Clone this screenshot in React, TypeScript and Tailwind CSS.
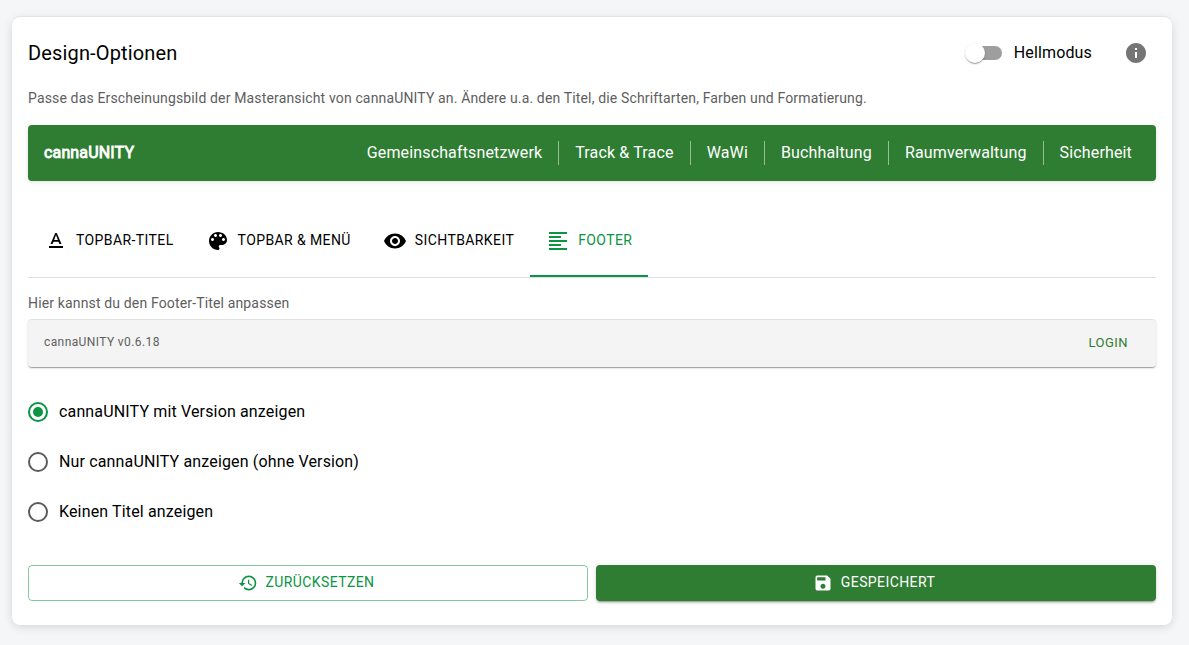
import type { ReactNode } from "react";
import { MdFormatAlignLeft, MdHistory, MdInfo, MdSave, MdTextFormat, MdVisibility } from "react-icons/md";

const navItems = [
  "Gemeinschaftsnetzwerk",
  "Track & Trace",
  "WaWi",
  "Buchhaltung",
  "Raumverwaltung",
  "Sicherheit",
];

function PaletteIcon() {
  return (
    <svg viewBox="0 0 24 24" fill="currentColor" className="h-6 w-6">
      <path d="M12 3c-4.97 0-9 4.03-9 9s4.03 9 9 9c.83 0 1.5-.67 1.5-1.5 0-.39-.15-.74-.39-1.01-.23-.26-.38-.61-.38-.99 0-.83.67-1.5 1.5-1.5H16c2.76 0 5-2.24 5-5 0-4.42-4.03-8-9-8zm-5.5 9c-.83 0-1.5-.67-1.5-1.5S5.67 9 6.5 9 8 9.67 8 10.5 7.33 12 6.5 12zm3-4C8.67 8 8 7.33 8 6.5S8.67 5 9.5 5s1.5.67 1.5 1.5S10.33 8 9.5 8zm5 0c-.83 0-1.5-.67-1.5-1.5S13.67 5 14.5 5s1.5.67 1.5 1.5S15.33 8 14.5 8zm3 4c-.83 0-1.5-.67-1.5-1.5S16.67 9 17.5 9s1.5.67 1.5 1.5-.67 1.5-1.5 1.5z" />
    </svg>
  );
}

function Header() {
  return (
    <header className="flex h-[72px] items-center justify-between">
      <h1 className="text-[20px] leading-8 tracking-[0.15px]">Design-Optionen</h1>
      <div className="flex items-center pr-2">
        <button aria-label="Hellmodus" className="flex h-[14px] w-[37px] items-center pl-px">
          <span className="flex h-[14px] w-[34px] items-center rounded-full bg-[#9e9e9e]">
            <span className="-ml-[1px] h-5 w-5 shrink-0 -translate-x-[2px] rounded-full bg-white shadow-[0_2px_1px_-1px_rgba(0,0,0,0.2),0_1px_1px_0_rgba(0,0,0,0.14),0_1px_3px_0_rgba(0,0,0,0.12)]" />
          </span>
        </button>
        <span className="ml-[10px] text-[16px] leading-6 tracking-[0.15px]">Hellmodus</span>
        <MdInfo className="ml-8 h-6 w-6 text-[#757575]" />
      </div>
    </header>
  );
}

function Topbar() {
  return (
    <nav className="flex h-14 items-center justify-between rounded-[4px] bg-[#2e7d32] px-4 text-white shadow-[0_1px_4px_rgba(0,0,0,0.12)]">
      <span className="text-[16px] leading-6 tracking-[0.15px] [-webkit-text-stroke:0.8px_white]">cannaUNITY</span>
      <ul className="flex items-center pr-2 text-[16px] leading-6 tracking-[0.15px]">
        {navItems.map((item, i) => (
          <li key={item} className="flex items-center">
            {i > 0 && <span className="mx-4 h-6 w-px bg-white/50" />}
            {item}
          </li>
        ))}
      </ul>
    </nav>
  );
}

function Tab({ icon, label, active = false }: { icon: ReactNode; label: string; active?: boolean }) {
  return (
    <button
      className={
        active
          ? "flex h-[71px] items-center gap-2 border-b-2 border-[#0b9444] px-4 pt-px text-[#0b9444]"
          : "flex h-[71px] items-center gap-2 border-b-2 border-transparent px-4 pt-px"
      }
    >
      {icon}
      <span className="text-[14px] leading-[17.5px] tracking-[0.4px]">{label}</span>
    </button>
  );
}

function Option({ label, selected = false }: { label: string; selected?: boolean }) {
  return (
    <label className="flex h-[50px] items-center gap-[11px]">
      <span
        className={
          selected
            ? "flex h-5 w-5 items-center justify-center rounded-full border-2 border-[#0b9444]"
            : "h-5 w-5 rounded-full border-2 border-[#5c5c5c]"
        }
      >
        {selected && <span className="h-[10px] w-[10px] rounded-full bg-[#0b9444]" />}
      </span>
      <span className="text-[16px] leading-6 tracking-[0.15px]">{label}</span>
    </label>
  );
}

export default function App() {
  return (
    <div className="h-[645px] bg-[#f4f6f8] pt-[17px] pl-3 font-['Roboto',sans-serif] text-black">
      <main className="flex h-[608px] w-[1160px] flex-col rounded-[8px] bg-white px-4 shadow-[0_2px_10px_0_rgba(0,0,0,0.13),0_-1px_0_0_rgba(0,0,0,0.04)]">
        <Header />
        <p className="-mt-px mb-[17px] text-[14px] leading-5 tracking-[0.15px] text-[#5e5e5e]">
          Passe das Erscheinungsbild der Masteransicht von cannaUNITY an. Ändere u.a. den Titel, die Schriftarten,
          Farben und Formatierung.
        </p>
        <Topbar />
        <div className="mt-[25px] flex h-[72px] border-b border-[#e0e0e0]">
          <Tab icon={<MdTextFormat className="h-6 w-6" />} label="TOPBAR-TITEL" />
          <Tab icon={<PaletteIcon />} label="TOPBAR & MENÜ" />
          <Tab icon={<MdVisibility className="h-6 w-6" />} label="SICHTBARKEIT" />
          <Tab icon={<MdFormatAlignLeft className="h-6 w-6" />} label="FOOTER" active />
        </div>
        <p className="mt-[15px] text-[14px] leading-5 tracking-[0.15px] text-[#5e5e5e]">
          Hier kannst du den Footer-Titel anpassen
        </p>
        <div className="mt-[7px] flex h-[47px] items-center justify-between rounded-[4px] bg-[#f4f4f4] pr-7 pl-4 shadow-[0_2px_1px_-1px_rgba(0,0,0,0.2),0_1px_1px_0_rgba(0,0,0,0.14),0_1px_3px_0_rgba(0,0,0,0.12),0_-1px_0_0_rgba(0,0,0,0.1)]">
          <span className="pb-[3px] text-[12px] leading-5 tracking-[0.4px] text-[#5e5e5e]">cannaUNITY v0.6.18</span>
          <span className="pb-px text-[13px] leading-5 tracking-[0.46px] text-[#2e7d32]">LOGIN</span>
        </div>
        <div className="mt-5 flex flex-col">
          <Option label="cannaUNITY mit Version anzeigen" selected />
          <Option label="Nur cannaUNITY anzeigen (ohne Version)" />
          <Option label="Keinen Titel anzeigen" />
        </div>
        <div className="mt-7 grid grid-cols-2 gap-2 text-[14px] leading-6 tracking-[0.4px]">
          <button className="flex h-9 items-center justify-center gap-2 rounded-[4px] border border-[#0b9444]/50 pr-1 text-[#0b9444]">
            <MdHistory className="h-5 w-5" />
            <span className="pb-0.5">ZURÜCKSETZEN</span>
          </button>
          <button className="flex h-9 items-center justify-center gap-2 rounded-[4px] bg-[#2e7d32] pr-1 text-white shadow-[0_3px_1px_-2px_rgba(0,0,0,0.2),0_2px_2px_0_rgba(0,0,0,0.14),0_1px_5px_0_rgba(0,0,0,0.12)]">
            <MdSave className="h-5 w-5" />
            <span className="pb-0.5">GESPEICHERT</span>
          </button>
        </div>
      </main>
    </div>
  );
}
